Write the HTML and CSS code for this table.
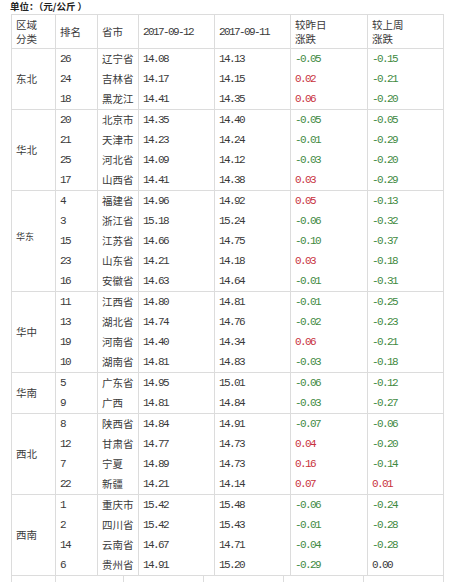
FILE: index.html
```html
<!DOCTYPE html>
<html lang="zh">
<head>
<meta charset="utf-8">
<title>猪价</title>
<link rel="stylesheet" href="styles.css">
</head>
<body>
<div class="page">
  <div class="unit">单位：（元/公斤 ）</div>
  <table class="price">
    <colgroup>
      <col class="w45"><col class="w42"><col class="w41"><col class="w76"><col class="w76"><col class="w77"><col class="w76">
    </colgroup>
    <thead>
      <tr><th class="first">区域<br>分类</th><th>排名</th><th>省市</th><th class="num">2017-09-12</th><th class="num">2017-09-11</th><th>较昨日<br>涨跌</th><th>较上周<br>涨跌</th></tr>
    </thead>
    <tbody>
      <tr><td class="first region" rowspan="3">东北</td><td class="num">26</td><td>辽宁省</td><td class="num">14.08</td><td class="num">14.13</td><td class="num dn">-0.05</td><td class="num dn">-0.15</td></tr>
      <tr><td class="num">24</td><td>吉林省</td><td class="num">14.17</td><td class="num">14.15</td><td class="num up">0.02</td><td class="num dn">-0.21</td></tr>
      <tr><td class="num">18</td><td>黑龙江</td><td class="num">14.41</td><td class="num">14.35</td><td class="num up">0.06</td><td class="num dn">-0.20</td></tr>
    </tbody>
    <tbody>
      <tr><td class="first region" rowspan="4">华北</td><td class="num">20</td><td>北京市</td><td class="num">14.35</td><td class="num">14.40</td><td class="num dn">-0.05</td><td class="num dn">-0.05</td></tr>
      <tr><td class="num">21</td><td>天津市</td><td class="num">14.23</td><td class="num">14.24</td><td class="num dn">-0.01</td><td class="num dn">-0.29</td></tr>
      <tr><td class="num">25</td><td>河北省</td><td class="num">14.09</td><td class="num">14.12</td><td class="num dn">-0.03</td><td class="num dn">-0.20</td></tr>
      <tr><td class="num">17</td><td>山西省</td><td class="num">14.41</td><td class="num">14.38</td><td class="num up">0.03</td><td class="num dn">-0.29</td></tr>
    </tbody>
    <tbody>
      <tr><td class="first region small" rowspan="5">华东</td><td class="num">4</td><td>福建省</td><td class="num">14.96</td><td class="num">14.92</td><td class="num up">0.05</td><td class="num dn">-0.13</td></tr>
      <tr><td class="num">3</td><td>浙江省</td><td class="num">15.18</td><td class="num">15.24</td><td class="num dn">-0.06</td><td class="num dn">-0.32</td></tr>
      <tr><td class="num">15</td><td>江苏省</td><td class="num">14.66</td><td class="num">14.75</td><td class="num dn">-0.10</td><td class="num dn">-0.37</td></tr>
      <tr><td class="num">23</td><td>山东省</td><td class="num">14.21</td><td class="num">14.18</td><td class="num up">0.03</td><td class="num dn">-0.18</td></tr>
      <tr><td class="num">16</td><td>安徽省</td><td class="num">14.63</td><td class="num">14.64</td><td class="num dn">-0.01</td><td class="num dn">-0.31</td></tr>
    </tbody>
    <tbody>
      <tr><td class="first region" rowspan="4">华中</td><td class="num">11</td><td>江西省</td><td class="num">14.80</td><td class="num">14.81</td><td class="num dn">-0.01</td><td class="num dn">-0.25</td></tr>
      <tr><td class="num">13</td><td>湖北省</td><td class="num">14.74</td><td class="num">14.76</td><td class="num dn">-0.02</td><td class="num dn">-0.23</td></tr>
      <tr><td class="num">19</td><td>河南省</td><td class="num">14.40</td><td class="num">14.34</td><td class="num up">0.06</td><td class="num dn">-0.21</td></tr>
      <tr><td class="num">10</td><td>湖南省</td><td class="num">14.81</td><td class="num">14.83</td><td class="num dn">-0.03</td><td class="num dn">-0.18</td></tr>
    </tbody>
    <tbody>
      <tr><td class="first region" rowspan="2">华南</td><td class="num">5</td><td>广东省</td><td class="num">14.95</td><td class="num">15.01</td><td class="num dn">-0.06</td><td class="num dn">-0.12</td></tr>
      <tr><td class="num">9</td><td>广西</td><td class="num">14.81</td><td class="num">14.84</td><td class="num dn">-0.03</td><td class="num dn">-0.27</td></tr>
    </tbody>
    <tbody>
      <tr><td class="first region" rowspan="4">西北</td><td class="num">8</td><td>陕西省</td><td class="num">14.84</td><td class="num">14.91</td><td class="num dn">-0.07</td><td class="num dn">-0.06</td></tr>
      <tr><td class="num">12</td><td>甘肃省</td><td class="num">14.77</td><td class="num">14.73</td><td class="num up">0.04</td><td class="num dn">-0.20</td></tr>
      <tr><td class="num">7</td><td>宁夏</td><td class="num">14.89</td><td class="num">14.73</td><td class="num up">0.16</td><td class="num dn">-0.14</td></tr>
      <tr><td class="num">22</td><td>新疆</td><td class="num">14.21</td><td class="num">14.14</td><td class="num up">0.07</td><td class="num up">0.01</td></tr>
    </tbody>
    <tbody class="last">
      <tr><td class="first region" rowspan="4">西南</td><td class="num">1</td><td>重庆市</td><td class="num">15.42</td><td class="num">15.48</td><td class="num dn">-0.06</td><td class="num dn">-0.24</td></tr>
      <tr><td class="num">2</td><td>四川省</td><td class="num">15.42</td><td class="num">15.43</td><td class="num dn">-0.01</td><td class="num dn">-0.28</td></tr>
      <tr><td class="num">14</td><td>云南省</td><td class="num">14.67</td><td class="num">14.71</td><td class="num dn">-0.04</td><td class="num dn">-0.28</td></tr>
      <tr><td class="num">6</td><td>贵州省</td><td class="num">14.91</td><td class="num">15.20</td><td class="num dn">-0.29</td><td class="num">0.00</td></tr>
    </tbody>
  </table>
  <table class="next">
    <colgroup>
      <col class="w45"><col class="w68"><col class="w80"><col class="w80"><col class="w80"><col class="w80">
    </colgroup>
    <tbody>
      <tr><td class="first"></td><td></td><td></td><td></td><td></td><td></td></tr>
    </tbody>
  </table>
</div>
</body>
</html>
```

FILE: styles.css
```css
html, body {
  margin: 0;
  padding: 0;
  background: #ffffff;
}

.page {
  padding: 0 0 0 11px;
  font-family: "Noto Sans CJK SC", "Liberation Sans", sans-serif;
  color: #333333;
}

.unit {
  margin-left: -1px;
  height: 14px;
  line-height: 13px;
  font-size: 9.5px;
  font-weight: bold;
  color: #222222;
}

table {
  border-collapse: separate;
  border-spacing: 0;
  table-layout: fixed;
  width: 433px;
}

.w45 { width: 45px; }
.w42 { width: 42px; }
.w41 { width: 41px; }
.w76 { width: 76px; }
.w77 { width: 77px; }
.w68 { width: 68px; }
.w80 { width: 80px; }

th, td {
  box-sizing: border-box;
  padding: 0 0 0 4px;
  border-right: 1px solid #dcdcdc;
  text-align: left;
  vertical-align: middle;
  white-space: nowrap;
  overflow: hidden;
  font-size: 10.5px;
  font-weight: normal;
  color: #3a3a3a;
}

th.first, td.first {
  border-left: 1px solid #dcdcdc;
}

th {
  border-top: 1px solid #dcdcdc;
  height: 34px;
  line-height: 14px;
  padding-top: 1px;
}

td {
  height: 20px;
  line-height: 20px;
}

.price tbody tr:first-child td {
  border-top: 1px solid #dcdcdc;
  height: 21px;
}

.price tbody.last tr:last-child td,
.price tbody.last td.region {
  border-bottom: 1px solid #dcdcdc;
}

.price tbody.last tr:last-child td {
  height: 21px;
}

.price tbody.last td.region {
  height: auto;
}

td.region {
  font-size: 10.5px;
}

td.region.small {
  font-size: 9px;
  padding-bottom: 8px;
}

.num {
  font-family: "Liberation Mono", monospace;
  font-size: 11px;
  letter-spacing: -1.6px;
}

.up { color: #c8323c; }
.dn { color: #3f8a3f; }

.next td {
  height: 20px;
}
```
